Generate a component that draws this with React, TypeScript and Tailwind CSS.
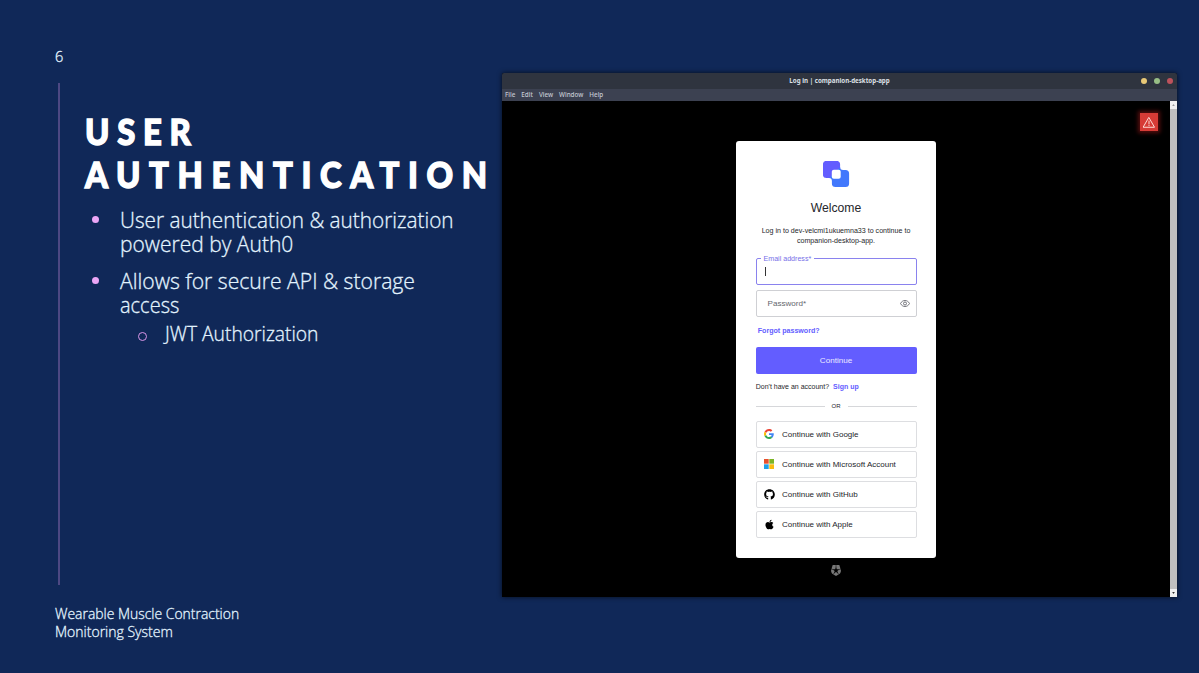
import React from "react";
import { FaApple, FaGithub } from "react-icons/fa";

function GoogleIcon() {
  return (
    <svg viewBox="0 0 48 48" className="size-[10px]">
      <path fill="#EA4335" d="M24 9.5c3.54 0 6.71 1.22 9.21 3.6l6.85-6.85C35.9 2.38 30.47 0 24 0 14.62 0 6.51 5.38 2.56 13.22l7.98 6.19C12.43 13.72 17.74 9.5 24 9.5z" />
      <path fill="#4285F4" d="M46.98 24.55c0-1.57-.15-3.09-.38-4.55H24v9.02h12.94c-.58 2.96-2.26 5.48-4.78 7.18l7.73 6c4.51-4.18 7.09-10.36 7.09-17.65z" />
      <path fill="#FBBC05" d="M10.53 28.59A14.5 14.5 0 0 1 9.77 24c0-1.6.27-3.14.76-4.59l-7.98-6.19A23.9 23.9 0 0 0 0 24c0 3.88.92 7.54 2.56 10.78l7.97-6.19z" />
      <path fill="#34A853" d="M24 48c6.48 0 11.93-2.13 15.89-5.81l-7.73-6c-2.15 1.45-4.92 2.3-8.16 2.3-6.26 0-11.57-4.22-13.47-9.91l-7.98 6.19C6.51 42.62 14.62 48 24 48z" />
    </svg>
  );
}

function MicrosoftIcon() {
  return (
    <svg viewBox="0 0 20 20" className="size-[10px]">
      <path fill="#E8502C" d="M0 0h9.4v9.4H0z" />
      <path fill="#7CB526" d="M10.6 0H20v9.4h-9.4z" />
      <path fill="#1E9FE8" d="M0 10.6h9.4V20H0z" />
      <path fill="#F9BC10" d="M10.6 10.6H20V20h-9.4z" />
    </svg>
  );
}

function BrandMark() {
  return (
    <svg viewBox="0.500 0.500 27 27" className="mt-[20px] size-[27px]">
      <path fill="#635DFF" d="M4 .4h10a3.600 3.600 0 0 1 3.600 3.600v5.400L9.400 17.600H4A3.600 3.600 0 0 1 .4 14V4A3.600 3.600 0 0 1 4 .4z" />
      <path fill="#4278FC" d="M17.600 6.500q0 2.900 3 2.900H23a3.600 3.600 0 0 1 3.600 3.600v10a3.600 3.600 0 0 1-3.600 3.600H13A3.600 3.600 0 0 1 9.400 23v-2.400q0-3-2.900-3L11 13z" />
      <rect x="9.300" y="9.300" width="8.900" height="8.900" rx="2" fill="#fff" />
    </svg>
  );
}

function EyeIcon() {
  return (
    <svg viewBox="0 0 20 14" fill="none" stroke="#65676e" strokeWidth="1.8" className="h-[7px] w-[10px]">
      <path d="M1 7C3 3.2 6.2 1 10 1s7 2.200 9 6c-2 3.800-5.200 6-9 6S3 10.800 1 7z" />
      <circle cx="10" cy="7" r="3" />
    </svg>
  );
}

function AuthBadge() {
  return (
    <svg viewBox="0 0 24 26" className="h-[11px] w-[10px]">
      <path fill="#777" d="M4 0h16l3.500 11c1 4-.5 8-3.500 10.500L12 26l-8-4.500C1 19-.5 15 .5 11z" />
      <path fill="#000" d="M12 4l2 6.200h6.500l-5.300 3.900 2 6.300L12 16.500l-5.200 3.900 2-6.300L3.500 10.200H10z" />
      <path stroke="#000" strokeWidth="1.200" d="M12 0v6M0 9l5 2M24 9l-5 2M6 22l2-4M18 22l-2-4" />
    </svg>
  );
}

const providers = [
  { name: "Google", icon: <GoogleIcon /> },
  { name: "Microsoft Account", icon: <MicrosoftIcon /> },
  { name: "GitHub", icon: <FaGithub className="size-[11px] text-black" /> },
  { name: "Apple", icon: <FaApple className="size-[11px] text-black" /> },
];

function LoginCard() {
  return (
    <section className="flex h-[416.500px] w-[200.500px] shrink-0 flex-col items-center rounded-[3px] bg-white px-5 font-['Liberation_Sans',sans-serif] font-normal text-[#25262b]">
      <BrandMark />
      <h2 className="mt-[11.500px] text-[12.200px] leading-[16px]">Welcome</h2>
      <p className="mt-[10px] text-center text-[7.100px] leading-[10.500px] whitespace-nowrap">
        Log in to dev-velcmi1ukuemna33 to continue to
        <br />
        companion-desktop-app.
      </p>
      <div className="relative mt-[11px] flex h-[27px] w-[161px] items-center rounded-[2px] border border-[#8a82ee] px-2">
        <span className="absolute -top-[4px] left-[4px] bg-white px-[3px] text-[7.100px] leading-[9px] text-[#7770e8]">Email address*</span>
        <span className="h-[9px] w-px bg-[#333]" />
      </div>
      <div className="mt-[5.500px] flex h-[27px] w-[161px] items-center justify-between rounded-[2px] border border-[#cfd0d4] pr-[6px] pl-[11px] text-[8.100px] text-[#65676e]">
        <span className="pt-px">Password*</span>
        <EyeIcon />
      </div>
      <a className="mt-[8.500px] self-start pl-[2px] text-[7.100px] leading-[10px] font-bold text-[#635dff]">Forgot password?</a>
      <button className="mt-[11.500px] h-[26.500px] w-[161px] rounded-[2px] bg-[#635dff] pt-px text-[8.100px] text-[#eceaff]">Continue</button>
      <p className="mt-[8px] self-start text-[7px] leading-[10px] whitespace-nowrap">
        Don't have an account?<a className="ml-[4px] font-bold text-[#635dff]">Sign up</a>
      </p>
      <div className="mt-[9.500px] flex h-[10px] w-[161px] items-center gap-[7px] text-[6px]">
        <span className="h-px flex-1 bg-[#d6d7da]" />
        <span>OR</span>
        <span className="h-px flex-1 bg-[#d6d7da]" />
      </div>
      <div className="mt-[9.500px] flex w-[161px] flex-col gap-[3px]">
        {providers.map((p) => (
          <button key={p.name} className="flex h-[27px] items-center rounded-[2px] border border-[#dddee1] pl-[7px] text-[8px]">
            <span className="flex w-[11px] justify-center">{p.icon}</span>
            <span className="ml-[7.500px] pt-px">Continue with {p.name}</span>
          </button>
        ))}
      </div>
    </section>
  );
}

function AppWindow() {
  return (
    <div className="mt-[73px] flex h-[523.500px] w-[675px] flex-col overflow-hidden rounded-t-[2px] bg-black font-['Noto_Sans',sans-serif] font-normal shadow-[0_0_5px_rgba(0,0,0,0.7)]">
      <header className="grid h-4 shrink-0 grid-cols-[1fr_auto_1fr] items-center bg-[#2f343f] text-[6.200px] font-bold text-[#dde0e6]">
        <span />
        <span>Log in | companion-desktop-app</span>
        <div className="flex justify-end gap-[6.500px] pr-[4px]">
          <span className="size-[6.500px] rounded-full bg-[#e8c877]" />
          <span className="size-[6.500px] rounded-full bg-[#98be86]" />
          <span className="size-[6.500px] rounded-full bg-[#bd525c]" />
        </div>
      </header>
      <nav className="flex h-3 shrink-0 items-center gap-[6px] bg-[#3c4151] pl-[3px] text-[6.300px] font-medium text-[#c5c9d3]">
        <span>File</span>
        <span>Edit</span>
        <span>View</span>
        <span>Window</span>
        <span>Help</span>
      </nav>
      <div className="flex flex-1">
        <div className="relative flex flex-1 flex-col items-center pt-10">
          <LoginCard />
          <div className="mt-[7px]">
            <AuthBadge />
          </div>
          <div className="absolute top-[12px] right-[12px] flex size-[18px] items-center justify-center bg-[#d63b36] shadow-[0_0_4px_2px_rgba(190,30,30,0.45)]">
            <svg viewBox="0 0 24 22" fill="none" stroke="#ffe5df" strokeWidth="1.900" strokeLinejoin="round" strokeLinecap="round" className="h-[11px] w-[12px]">
              <path d="M12 1.500L23 20.500H1z" />
              <path d="M12 8v6M12 17v.3" />
            </svg>
          </div>
        </div>
        <div className="flex w-[7px] flex-col justify-between bg-[#bfbfbf]">
          <span className="flex h-2 items-center justify-center bg-[#f0f0f0]">
            <svg viewBox="0 0 4 3" className="h-[2px] w-[3px]"><path d="M0 3l2-3 2 3z" fill="#999" /></svg>
          </span>
          <span className="flex h-2 items-center justify-center bg-[#f0f0f0]">
            <svg viewBox="0 0 4 3" className="h-[2px] w-[3px]"><path d="M0 0l2 3 2-3z" fill="#333" /></svg>
          </span>
        </div>
      </div>
    </div>
  );
}

export default function App() {
  return (
    <main className="flex h-[673px] w-[1199px] overflow-hidden bg-[#102858] font-['Open_Sans',sans-serif] font-light text-[#e3f4ff]">
      <div className="flex w-[502px] shrink-0 flex-col pl-[55px] whitespace-nowrap [-webkit-text-stroke:0.300px_#e3f4ff]">
        <div className="mt-[46px] h-[20px] text-[14.500px] leading-[21px]">6</div>
        <div className="mt-[17px] ml-[3px] h-[502px] border-l-2 border-[#4d4883] pl-[24px]">
          <h1 className="pt-[27px] pl-px font-['Lato',sans-serif] text-[36px] leading-[43px] font-black text-white [-webkit-text-stroke:1.400px_white]">
            <span className="block w-fit origin-left scale-x-[0.910] tracking-[8.500px]">USER</span>
            <span className="block w-fit origin-left scale-x-[0.910] tracking-[9.500px]">AUTHENTICATION</span>
          </h1>
          <ul className="pt-[12px] text-[22.500px] leading-[24px]">
            <li className="flex">
              <span className="mt-[8px] ml-[8px] size-[7px] rounded-full bg-[#eba6f6]" />
              <span className="ml-[21px]">
                <span className="block w-fit origin-left scale-x-[0.922]">User authentication &amp; authorization</span>
                <span className="block w-fit origin-left scale-x-[0.934]">powered by Auth0</span>
              </span>
            </li>
            <li className="mt-[13px] flex">
              <span className="mt-[8px] ml-[8px] size-[7px] rounded-full bg-[#eba6f6]" />
              <span className="ml-[21px]">
                <span className="block w-fit origin-left scale-x-[0.940]">Allows for secure API &amp; storage</span>
                <span className="block w-fit origin-left scale-x-[0.890]">access</span>
              </span>
            </li>
            <li className="mt-[5px] flex text-[20px] leading-[24px]">
              <span className="mt-[10px] ml-[54px] size-[9px] rounded-full border-[1.500px] border-[#d995e8]" />
              <span className="ml-[18px] block w-fit origin-left scale-x-[0.963]">JWT Authorization</span>
            </li>
          </ul>
        </div>
        <footer className="mt-[20px] text-[14.500px] leading-[18px]">
          <span className="block w-fit origin-left scale-x-[0.961]">Wearable Muscle Contraction</span>
          <span className="block w-fit origin-left scale-x-[0.966]">Monitoring System</span>
        </footer>
      </div>
      <AppWindow />
    </main>
  );
}
